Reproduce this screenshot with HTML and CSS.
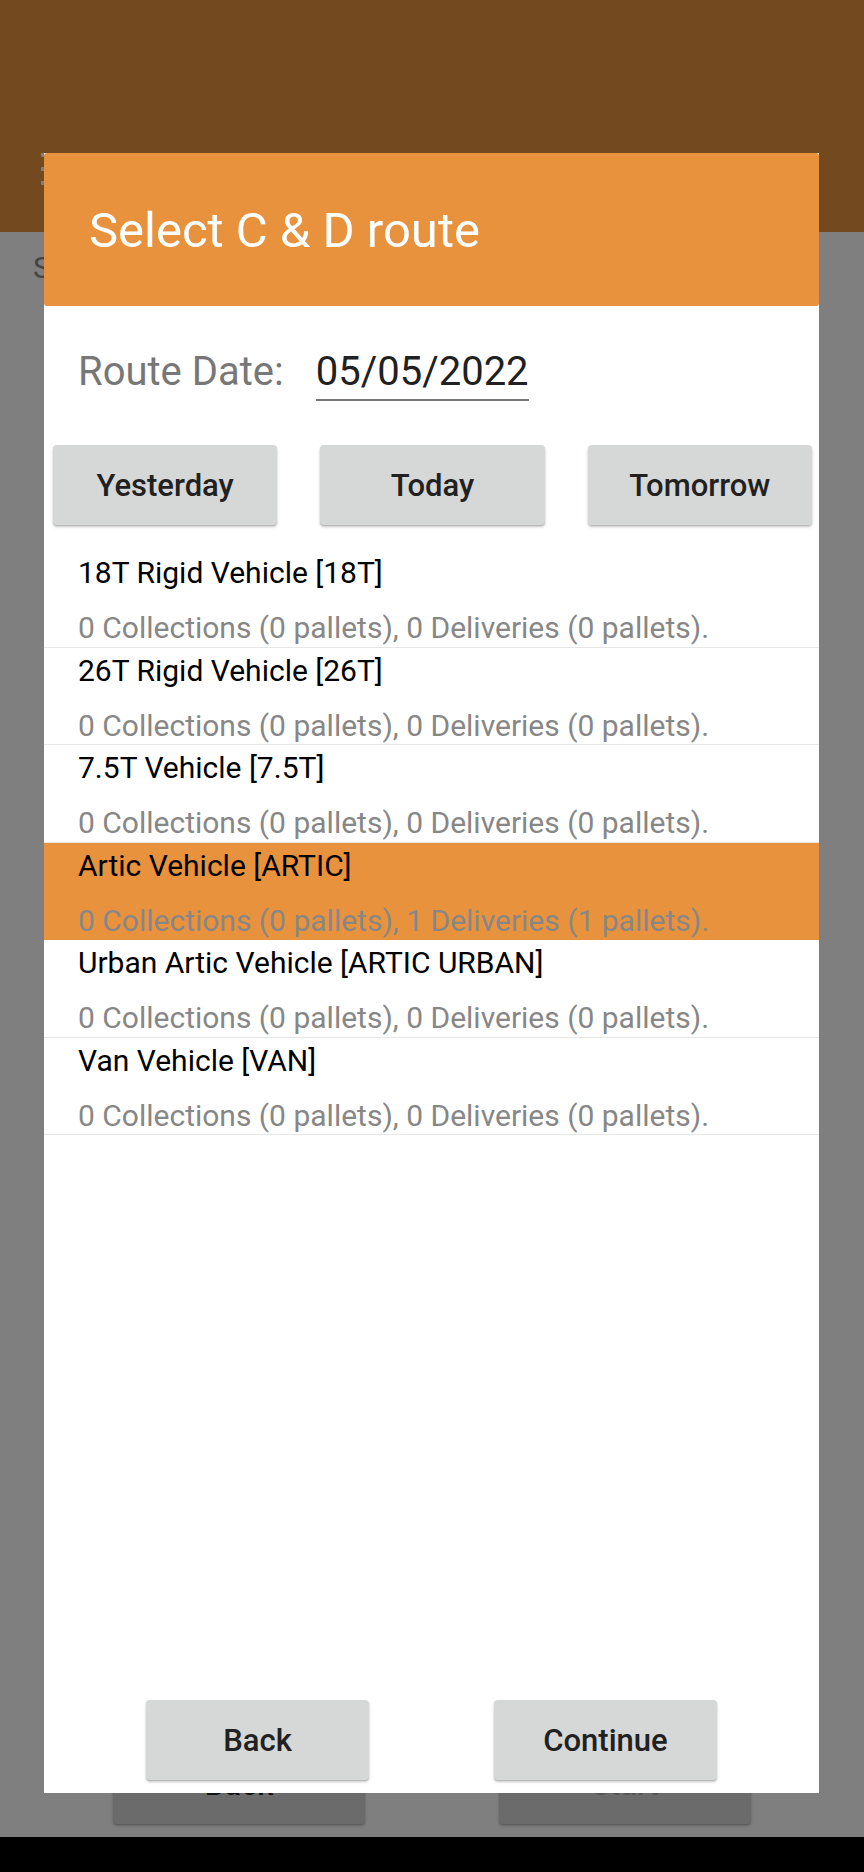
FILE: index.html
```html
<!DOCTYPE html>
<html lang="en">

<head>
    <meta charset="UTF-8">
    <meta name="viewport" content="width=device-width, initial-scale=1.0">
    <title>Select C &amp; D route</title>
    <link rel="stylesheet" href="styles.css">
</head>

<body>
    <!-- screen behind the dialog -->
    <div class="screen">
        <header class="appbar">
            <span class="menu-icon">
                <span></span>
                <span></span>
                <span></span>
            </span>
        </header>
        <main class="screen-body">
            <p class="screen-hint">S</p>
            <div class="screen-actions">
                <button type="button" class="btn">Back</button>
                <button type="button" class="btn" disabled>Start</button>
            </div>
        </main>
        <div class="navbar"></div>
    </div>
    <div class="scrim"></div>

    <!-- route dialog -->
    <div class="dialog">
        <div class="dlg-head">
            <h1>Select C &amp; D route</h1>
        </div>
        <div class="date-row">
            <label for="route-date">Route Date:</label>
            <span class="date-value" id="route-date">05/05/2022</span>
        </div>
        <div class="day-buttons">
            <button type="button" class="btn">Yesterday</button>
            <button type="button" class="btn">Today</button>
            <button type="button" class="btn">Tomorrow</button>
        </div>
        <ul class="routes">
            <li>
                <div class="route-name">18T Rigid Vehicle [18T]</div>
                <div class="route-info">0 Collections (0 pallets), 0 Deliveries (0 pallets).</div>
            </li>
            <li>
                <div class="route-name">26T Rigid Vehicle [26T]</div>
                <div class="route-info">0 Collections (0 pallets), 0 Deliveries (0 pallets).</div>
            </li>
            <li>
                <div class="route-name">7.5T Vehicle [7.5T]</div>
                <div class="route-info">0 Collections (0 pallets), 0 Deliveries (0 pallets).</div>
            </li>
            <li class="selected">
                <div class="route-name">Artic Vehicle [ARTIC]</div>
                <div class="route-info">0 Collections (0 pallets), 1 Deliveries (1 pallets).</div>
            </li>
            <li>
                <div class="route-name">Urban Artic Vehicle [ARTIC URBAN]</div>
                <div class="route-info">0 Collections (0 pallets), 0 Deliveries (0 pallets).</div>
            </li>
            <li>
                <div class="route-name">Van Vehicle [VAN]</div>
                <div class="route-info">0 Collections (0 pallets), 0 Deliveries (0 pallets).</div>
            </li>
        </ul>
        <div class="dlg-actions">
            <button type="button" class="btn">Back</button>
            <button type="button" class="btn">Continue</button>
        </div>
    </div>
</body>

</html>
```

FILE: styles.css
```css
* {
    padding: 0;
    margin: 0;
    box-sizing: border-box;
}

html,
body {
    width: 864px;
    height: 1872px;
    font-family: Roboto, "Noto Sans", sans-serif;
}

body {
    position: relative;
    overflow: hidden;
    background-color: #ffffff;
}

/* Screen behind */

.screen {
    display: flex;
    flex-direction: column;
    height: 100%;
}

.appbar {
    height: 232px;
    background-color: #e6943e;
    padding: 153px 0 0 41px;
}

.menu-icon {
    display: flex;
    flex-direction: column;
    gap: 10px;
    width: 26px;
}

.menu-icon span {
    height: 4px;
    background-color: #ffffff;
}

.screen-body {
    flex: 1;
    display: flex;
    flex-direction: column;
    justify-content: space-between;
    padding: 18px 0 13px 33px;
}

.screen-hint {
    font-size: 30px;
    color: #888888;
}

.screen-actions {
    display: flex;
    gap: 134px;
    padding-left: 80px;
}

.screen-actions .btn {
    width: 252px;
}

.navbar {
    height: 35px;
    background-color: #000000;
}

.scrim {
    position: absolute;
    inset: 0 0 35px 0;
    background-color: rgb(0 0 0 / 0.5);
}

/* Buttons */

.btn {
    height: 80px;
    border: none;
    border-radius: 4px;
    background-color: #d6d7d7;
    color: #212121;
    font-family: Roboto, sans-serif;
    font-size: 31px;
    font-weight: 500;
    box-shadow: 0 2px 3px rgb(0 0 0 / 0.22), 0 1px 1px rgb(0 0 0 / 0.12);
    cursor: pointer;
}

.btn:disabled {
    color: #aaaaaa;
}

/* Dialog */

.dialog {
    position: absolute;
    left: 44px;
    top: 153px;
    width: 775px;
    height: 1640px;
    display: flex;
    flex-direction: column;
    background-color: #ffffff;
}

.dlg-head {
    height: 153px;
    padding: 50px 0 0 45px;
    border-radius: 3px;
    background-color: #e8923e;
}

.dlg-head h1 {
    font-size: 49px;
    font-weight: normal;
    line-height: 56px;
    color: #ffffff;
}

.date-row {
    display: flex;
    align-items: flex-start;
    gap: 32px;
    margin-top: 42px;
    padding-left: 34px;
    font-size: 40px;
    line-height: 47px;
}

.date-row label {
    color: #777777;
}

.date-value {
    color: #212121;
    padding-bottom: 4px;
    border-bottom: 2px solid #777777;
}

.day-buttons {
    display: grid;
    grid-template-columns: repeat(3, 1fr);
    gap: 43px;
    margin-top: 44px;
    padding: 0 7px 0 9px;
}

.routes {
    list-style: none;
    margin-top: 25px;
}

.routes li {
    height: 97.5px;
    padding: 3px 0 0 34px;
    border-bottom: 1px solid #e6e6e6;
    font-size: 30px;
    line-height: 40px;
}

.routes li.selected {
    background-color: #e8923e;
    border-bottom-color: transparent;
}

.route-name {
    color: #000000;
}

.route-info {
    margin-top: 15px;
    color: #878787;
}

.dlg-actions {
    margin-top: auto;
    padding-bottom: 13px;
    display: flex;
    justify-content: center;
    gap: 125px;
}

.dlg-actions .btn {
    width: 223px;
}
```
